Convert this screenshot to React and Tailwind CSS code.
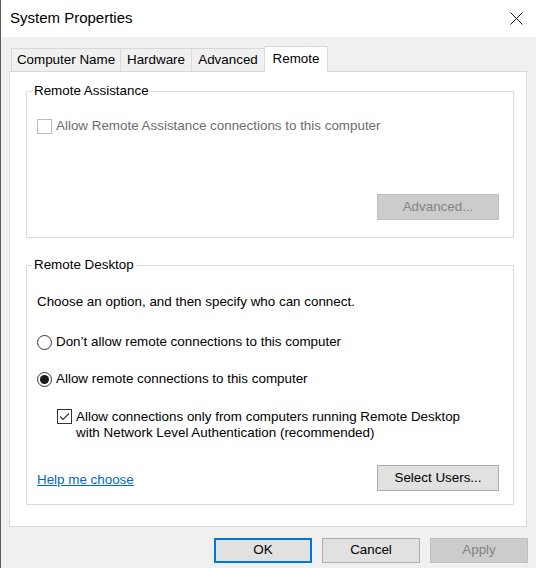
import React from "react";

const font = { fontFamily: '"Liberation Sans", Arial, sans-serif' };

function Tab({ label, selected, width }) {
  if (selected) {
    return (
      <div
        className={`${width} h-[26px] -mb-px relative z-10 bg-white border-l border-t border-r border-[#d9d9d9] flex items-center justify-center text-[13.4px] text-black`}
      >
        {label}
      </div>
    );
  }
  return (
    <div
      className={`${width} h-[23px] bg-[#f0f0f0] border-l border-t border-[#d9d9d9] flex items-center justify-center text-[13.4px] text-black`}
    >
      {label}
    </div>
  );
}

function Button({ children, variant = "normal", className = "" }) {
  const styles = {
    normal: "bg-[#e1e1e1] border border-[#adadad] text-black",
    default: "bg-[#e1e1e1] border-2 border-[#0078d7] text-black",
    disabled: "bg-[#cccccc] border border-[#bfbfbf] text-[#838383]",
  };
  return (
    <div
      className={`${styles[variant]} flex items-center justify-center text-[13.4px] ${className}`}
    >
      {children}
    </div>
  );
}

function CheckBox({ checked, disabled }) {
  return (
    <div
      className={`w-[15px] h-[15px] shrink-0 bg-white border ${
        disabled ? "border-[#bcbcbc]" : "border-[#333333]"
      } flex items-center justify-center`}
    >
      {checked && (
        <svg width="13" height="13" viewBox="0 0 13 13">
          <path d="M2 6.5 L5 9.5 L11 3.5" fill="none" stroke="#333" strokeWidth="1.1" />
        </svg>
      )}
    </div>
  );
}

function Radio({ checked }) {
  return (
    <div className="w-[15px] h-[15px] shrink-0 rounded-full bg-white border border-[#333333] flex items-center justify-center">
      {checked && <div className="w-[9px] h-[9px] rounded-full bg-[#1a1a1a]" />}
    </div>
  );
}

export default function App() {
  return (
    <div
      className="w-[536px] h-[568px] bg-[#f0f0f0] border-l border-[#5b5b5b] flex flex-col overflow-hidden"
      style={font}
    >
      {/* Title bar */}
      <div className="h-[37px] bg-white flex items-center justify-between pl-[9px] pr-[13px] shrink-0">
        <span className="text-[15px] text-black">System Properties</span>
        <svg width="13" height="13" viewBox="0 0 13 13">
          <path d="M0.5 0.5 L12.5 12.5 M12.5 0.5 L0.5 12.5" stroke="#111" strokeWidth="1" />
        </svg>
      </div>

      {/* Tabs + panel */}
      <div className="pl-[8px] pt-[9px]">
        <div className="flex items-end pl-[2px]">
          <Tab label="Computer Name" width="w-[109px]" />
          <Tab label="Hardware" width="w-[71px]" />
          <Tab label="Advanced" width="w-[73px]" />
          <Tab label="Remote" width="w-[64px]" selected />
        </div>
        <div className="w-[518px] h-[456px] bg-white border border-[#d9d9d9] pl-[16px] pt-[11px]">
          {/* Remote Assistance */}
          <fieldset className="w-[488px] border border-[#dcdcdc] pl-[10px] pr-[14px] pb-[17px]">
            <legend className="-ml-[5px] px-[2px] text-[13.4px] leading-[16px] text-black">
              Remote Assistance
            </legend>
            <div className="mt-[19px] flex items-center gap-[4px] h-[17px]">
              <CheckBox disabled />
              <span className="text-[13.4px] text-[#6d6d6d]">
                Allow Remote Assistance connections to this computer
              </span>
            </div>
            <div className="flex justify-end mt-[59px]">
              <Button variant="disabled" className="w-[122px] h-[26px]">
                Advanced...
              </Button>
            </div>
          </fieldset>

          {/* Remote Desktop */}
          <fieldset className="w-[488px] mt-[19px] border border-[#dcdcdc] pl-[10px] pr-[14px] pb-[13px]">
            <legend className="-ml-[5px] px-[2px] text-[13.4px] leading-[16px] text-black">
              Remote Desktop
            </legend>
            <div className="mt-[21px] text-[13.4px] leading-[16px] text-black">
              Choose an option, and then specify who can connect.
            </div>
            <div className="mt-[24px] flex items-center gap-[4px] h-[17px]">
              <Radio />
              <span className="text-[13.4px] text-black">
                Don’t allow remote connections to this computer
              </span>
            </div>
            <div className="mt-[20px] flex items-center gap-[4px] h-[17px]">
              <Radio checked />
              <span className="text-[13.4px] text-black">
                Allow remote connections to this computer
              </span>
            </div>
            <div className="mt-[21px] ml-[20px] flex items-start gap-[4px]">
              <CheckBox checked />
              <span className="text-[13.4px] leading-[15.5px] text-black">
                Allow connections only from computers running Remote Desktop
                <br />
                with Network Level Authentication (recommended)
              </span>
            </div>
            <div className="mt-[25px] flex items-center justify-between">
              <a href="#" className="text-[13.4px] text-[#0066cc] underline mt-[4px]">
                Help me choose
              </a>
              <Button className="w-[122px] h-[26px]">Select Users...</Button>
            </div>
          </fieldset>
        </div>
      </div>

      {/* Bottom buttons */}
      <div className="mt-[11px] flex justify-end gap-[10px] pr-[8px]">
        <Button variant="default" className="w-[98px] h-[25px]">
          OK
        </Button>
        <Button className="w-[98px] h-[25px]">Cancel</Button>
        <Button variant="disabled" className="w-[98px] h-[25px]">
          Apply
        </Button>
      </div>
    </div>
  );
}
